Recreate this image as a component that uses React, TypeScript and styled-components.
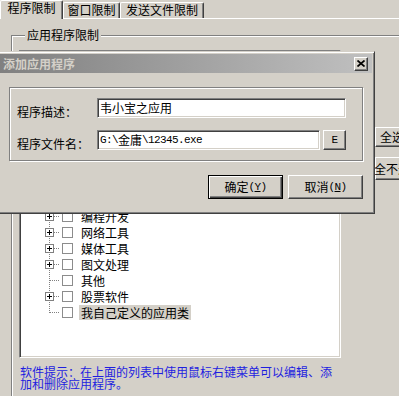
import React from 'react'
import styled, { createGlobalStyle, css } from 'styled-components'

const face = '#d4d0c8'
const shadow = '#808080'
const darkShadow = '#404040'

const GlobalStyle = createGlobalStyle`
  html, body {
    margin: 0;
    padding: 0;
    background: ${face};
  }
  body {
    font-family: 'Noto Sans CJK SC', 'Noto Sans', sans-serif;
    font-size: 12px;
    color: #000;
  }
  * {
    box-sizing: border-box;
  }
`

const raised = css`
  border: 1px solid;
  border-color: #fff ${darkShadow} ${darkShadow} #fff;
  box-shadow: inset -1px -1px ${shadow};
`

const sunken = css`
  border: 1px solid;
  border-color: ${shadow} #fff #fff ${shadow};
  box-shadow: inset 1px 1px ${darkShadow}, inset -1px -1px ${face};
`

const etched = css`
  border: 1px solid ${shadow};
  box-shadow: inset 1px 1px #fff, 1px 1px #fff;
`

interface TreeGroup {
  name: string
  expandable?: boolean
  selected?: boolean
  last?: boolean
}

const groups: TreeGroup[] = [
  { name: '编程开发', expandable: true },
  { name: '网络工具', expandable: true },
  { name: '媒体工具', expandable: true },
  { name: '图文处理', expandable: true },
  { name: '其他' },
  { name: '股票软件', expandable: true },
  { name: '我自己定义的应用类', selected: true, last: true },
]

const TreeGuide: React.FC<{ expandable?: boolean; last?: boolean }> = ({ expandable, last }) => (
  <svg width="20" height="16" viewBox="0 0 20 16">
    <line x1="9.5" y1="0" x2="9.5" y2={last ? 9 : 16} stroke={shadow} strokeDasharray="1 1" />
    <line x1="10" y1="8.5" x2="20" y2="8.5" stroke={shadow} strokeDasharray="1 1" />
    {expandable && (
      <>
        <rect x="5.5" y="4.5" width="8" height="8" fill="#fff" stroke={shadow} />
        <path d="M7 8.5h5M9.5 6v5" stroke="#000" />
      </>
    )}
  </svg>
)

const CloseGlyph = () => (
  <svg width="8" height="7" viewBox="0 0 8 7">
    <path d="M0.5 0.5l7 6M7.5 0.5l-7 6" stroke="#000" strokeWidth="1.7" />
  </svg>
)

const App: React.FC = () => {
  return (
    <Screen>
      <GlobalStyle />
      <TabStrip>
        <Tab $active $w={63}>程序限制</Tab>
        <Tab $w={57}>窗口限制</Tab>
        <Tab $w={84}>发送文件限制</Tab>
      </TabStrip>

      <Panel>
        <GroupBox>
          <Legend>应用程序限制</Legend>
          <GroupBody>
            <TreeColumn>
              <Tree>
                {groups.map((g) => (
                  <TreeRow key={g.name}>
                    <TreeGuide expandable={g.expandable} last={g.last} />
                    <CheckBox />
                    <TreeLabel $selected={g.selected}>{g.name}</TreeLabel>
                  </TreeRow>
                ))}
              </Tree>
              <Tip>
                软件提示：在上面的列表中使用鼠标右键菜单可以编辑、添
                <br />
                加和删除应用程序。
              </Tip>
            </TreeColumn>
            <SideButtons>
              <SideButton $h={20}>全选</SideButton>
              <SideButton $h={23}>全不选</SideButton>
            </SideButtons>
          </GroupBody>
        </GroupBox>
      </Panel>

      <Dialog>
        <TitleBar>
          <TitleText>添加应用程序</TitleText>
          <CloseButton>
            <CloseGlyph />
          </CloseButton>
        </TitleBar>
        <DialogBody>
          <FieldBox>
            <FieldRow>
              <FieldLabel>程序描述：</FieldLabel>
              <Edit>韦小宝之应用</Edit>
            </FieldRow>
            <FieldRow>
              <FieldLabel>程序文件名：</FieldLabel>
              <Edit>
                <Ascii>G:\</Ascii>金庸<Ascii>\12345.exe</Ascii>
              </Edit>
              <BrowseButton>
                <Ascii>E</Ascii>
              </BrowseButton>
            </FieldRow>
          </FieldBox>
          <ButtonRow>
            <DialogButton $default>
              确定
              <Ascii>
                (<u>Y</u>)
              </Ascii>
            </DialogButton>
            <DialogButton>
              取消
              <Ascii>
                (<u>N</u>)
              </Ascii>
            </DialogButton>
          </ButtonRow>
        </DialogBody>
      </Dialog>
    </Screen>
  )
}

const Screen = styled.div`
  position: relative;
  width: 399px;
  height: 396px;
  overflow: hidden;
  background: ${face};
`

const TabStrip = styled.div`
  display: flex;
  align-items: flex-end;
  height: 19px;
  border-bottom: 1px solid #fff;
`

const Tab = styled.div<{ $active?: boolean; $w: number }>`
  position: relative;
  z-index: ${(p) => (p.$active ? 1 : 0)};
  width: ${(p) => p.$w}px;
  height: ${(p) => (p.$active ? 19 : 16)}px;
  margin-bottom: ${(p) => (p.$active ? -1 : 0)}px;
  padding-top: 1px;
  display: flex;
  justify-content: center;
  line-height: 12px;
  white-space: nowrap;
  background: ${face};
  border-top: 1px solid #fff;
  border-left: 1px solid #fff;
  border-right: 1px solid ${darkShadow};
  border-radius: 2px 2px 0 0;
  box-shadow: inset -1px 0 ${shadow};
`

const Panel = styled.div`
  padding: 10px 0 0 11px;
`

const GroupBox = styled.fieldset`
  margin: 0;
  padding: 9px 0 0 7px;
  min-width: 0;
  width: 440px;
  height: 400px;
  ${etched}
`

const Legend = styled.legend`
  margin-left: 6px;
  padding: 0 2px;
  line-height: 12px;
  background: ${face};
`

const GroupBody = styled.div`
  display: flex;
  align-items: flex-start;
`

const TreeColumn = styled.div`
  width: 322px;
  display: flex;
  flex-direction: column;
`

const Tree = styled.div`
  height: 308px;
  padding: 157px 0 0 20px;
  background: #fff;
  ${sunken}
`

const TreeRow = styled.div`
  display: flex;
  align-items: center;
  height: 16px;

  svg {
    display: block;
    flex: none;
  }
`

const CheckBox = styled.span`
  flex: none;
  width: 11px;
  height: 11px;
  margin-left: 2px;
  border: 1px solid #8c8c8c;
  background: #fff;
`

const TreeLabel = styled.span<{ $selected?: boolean }>`
  margin-left: 6px;
  padding: 0 2px;
  height: 15px;
  line-height: 15px;
  white-space: nowrap;
  background: ${(p) => (p.$selected ? face : 'transparent')};
`

const Tip = styled.div`
  margin-top: 8px;
  padding-left: 1px;
  line-height: 12px;
  white-space: nowrap;
  color: #1e1ee0;
`

const SideButtons = styled.div`
  display: flex;
  flex-direction: column;
  gap: 10px;
  margin-left: 34px;
  padding-top: 77px;
`

const SideButton = styled.div<{ $h: number }>`
  width: 34px;
  height: ${(p) => p.$h}px;
  display: flex;
  align-items: center;
  justify-content: center;
  white-space: nowrap;
  line-height: 12px;
  background: ${face};
  ${raised}
`

const Dialog = styled.div`
  position: absolute;
  z-index: 2;
  left: -3px;
  top: 51px;
  width: 378px;
  padding: 2px;
  background: ${face};
  border: 1px solid;
  border-color: ${face} ${darkShadow} ${darkShadow} ${face};
  box-shadow: inset 1px 1px #fff, inset -1px -1px ${shadow};
`

const TitleBar = styled.div`
  height: 19px;
  display: flex;
  align-items: center;
  justify-content: space-between;
  padding: 0 4px 0 3px;
  background: linear-gradient(90deg, #808080, #c0c0c0);
`

const TitleText = styled.span`
  color: ${face};
  font-weight: bold;
  line-height: 12px;
  white-space: nowrap;
`

const CloseButton = styled.div`
  width: 14px;
  height: 14px;
  display: flex;
  align-items: center;
  justify-content: center;
  background: ${face};
  ${raised}
`

const DialogBody = styled.div`
  padding: 14px 9px 12px 9px;
`

const FieldBox = styled.div`
  display: flex;
  flex-direction: column;
  gap: 12px;
  padding: 10px 16px 10px 7px;
  ${etched}
`

const FieldRow = styled.div`
  display: flex;
  align-items: flex-end;
`

const FieldLabel = styled.span`
  width: 80px;
  flex: none;
  line-height: 12px;
  white-space: nowrap;
`

const Edit = styled.div`
  flex: 1;
  height: 20px;
  padding: 0 2px;
  display: flex;
  align-items: center;
  line-height: 16px;
  white-space: nowrap;
  background: #fff;
  ${sunken}
`

const Ascii = styled.span`
  font-family: 'Liberation Mono', monospace;
  font-size: 11px;
  letter-spacing: -0.6px;
`

const BrowseButton = styled.div`
  flex: none;
  width: 23px;
  height: 20px;
  margin-left: 3px;
  display: flex;
  align-items: center;
  justify-content: center;
  background: ${face};
  ${raised}
`

const ButtonRow = styled.div`
  display: flex;
  justify-content: flex-end;
  gap: 5px;
  margin-top: 14px;
`

const DialogButton = styled.div<{ $default?: boolean }>`
  width: 75px;
  height: 24px;
  display: flex;
  align-items: center;
  justify-content: center;
  line-height: 12px;
  white-space: nowrap;
  background: ${face};
  ${(p) =>
    p.$default
      ? css`
          border: 1px solid #000;
          box-shadow: inset 1px 1px #fff, inset -1px -1px ${darkShadow}, inset -2px -2px ${shadow};
        `
      : raised}
`

export default App
